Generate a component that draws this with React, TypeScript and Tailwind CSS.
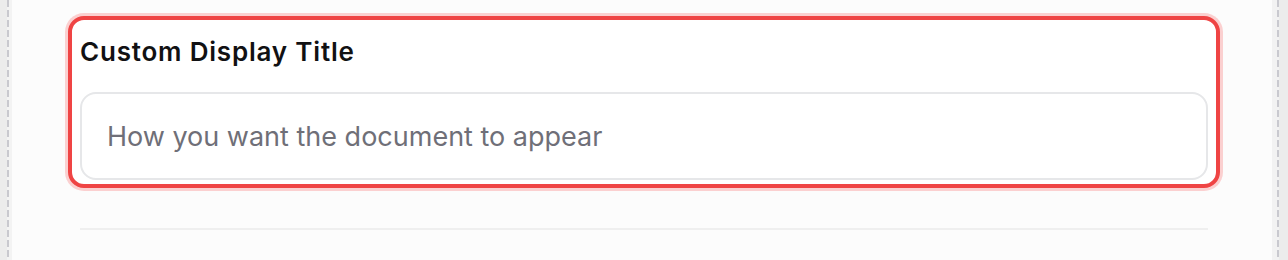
export default function App() {
  return (
    <div className="w-[1288px] h-[260px] flex overflow-hidden bg-[#fcfcfc] font-['Inter',sans-serif]">
      {/* left gutter */}
      <div className="w-[7px] bg-[#ececec]" />
      <div className="w-[2px] bg-[repeating-linear-gradient(to_bottom,#c9c9cf_0_7px,transparent_7px_10px)] bg-[#f3f3f3]" />
      <div className="w-[3px] bg-[#f3f3f3]" />

      {/* main */}
      <div className="flex-1 pt-[12px] pl-[56px] pr-[52px]">
        <div className="mt-[4px] rounded-[16px] border-4 border-[#ef4444] ring-[3px] ring-[#fbd0d0] bg-white px-[8px] pt-[16px] pb-[4px]">
          <label className="block text-[26px] leading-[32px] font-semibold tracking-[0.8px] text-[#111113] mb-[24px]">
            Custom Display Title
          </label>
          <input
            type="text"
            placeholder="How you want the document to appear"
            className="w-full h-[88px] rounded-[16px] border-2 border-[#e6e7e9] bg-white pl-[25px] text-[27px] text-[#111] placeholder:text-[#6f6f78] outline-none"
          />
        </div>
        <div className="mx-[12px] mt-[40px] h-[2px] bg-[#efefef]" />
      </div>

      {/* right gutter */}
      <div className="w-[5px] bg-[#f2f2f2]" />
      <div className="w-[2px] bg-[repeating-linear-gradient(to_bottom,#c9c9cf_0_7px,transparent_7px_10px)] bg-[#f2f2f2]" />
      <div className="w-[9px] bg-[#ececec]" />
    </div>
  );
}
